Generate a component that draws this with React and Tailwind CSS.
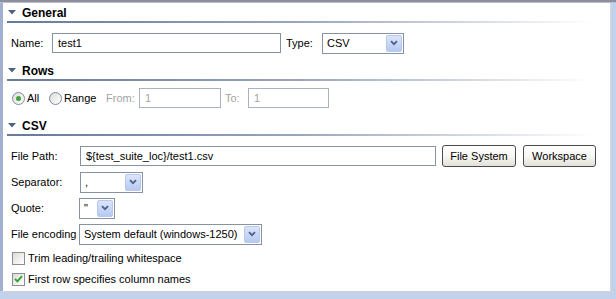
import React from 'react';

function SectionHeader({ title }) {
  return (
    <div>
      <div className="h-[17px] flex items-center pl-[5px]">
        <svg width="8" height="5" viewBox="0 0 8 5" className="mr-[6px]">
          <path d="M0 0h8L4 4.5z" fill="#4e6287" />
        </svg>
        <span className="font-bold text-[12px] leading-none">{title}</span>
      </div>
      <div className="ml-[4px] w-[586px] h-[2px] bg-gradient-to-r from-[#667a99] via-[#9aa6bb] to-white" />
    </div>
  );
}

function TextBox({ value, width, disabled }) {
  return (
    <div
      className={`h-[20px] flex items-center pl-[5px] bg-white border ${
        disabled ? 'border-[#a9b3bd] text-[#a3a3a3]' : 'border-[#8593a3]'
      }`}
      style={{ width }}
    >
      {value}
    </div>
  );
}

function Chevron() {
  return (
    <svg width="8" height="6" viewBox="0 0 8 6">
      <path d="M1 1.2l3 3 3-3" fill="none" stroke="#4d6185" strokeWidth="1.8" />
    </svg>
  );
}

function Select({ value, width }) {
  return (
    <div
      className="h-[21px] flex items-center bg-white border border-[#8593a3] pl-[4px] pr-[1px]"
      style={{ width }}
    >
      <span className="flex-1 whitespace-nowrap overflow-hidden">{value}</span>
      <div className="w-[16px] h-[17px] rounded-[2px] border border-[#b7c7ee] bg-gradient-to-b from-[#dbe5fb] to-[#b7c9f3] flex items-center justify-center">
        <Chevron />
      </div>
    </div>
  );
}

function Button({ label, width }) {
  return (
    <div
      className="h-[22px] flex items-center justify-center rounded-[3px] border border-[#4b4b4b] bg-gradient-to-b from-white via-[#f7f7f4] to-[#e2e0d8]"
      style={{ width }}
    >
      {label}
    </div>
  );
}

function Radio({ checked }) {
  return (
    <div className="w-[13px] h-[13px] rounded-full border border-[#7b8ca3] bg-gradient-to-br from-[#dcdcd6] to-white flex items-center justify-center">
      {checked && <div className="w-[5px] h-[5px] rounded-full bg-[#3ea43e]" />}
    </div>
  );
}

function Checkbox({ checked }) {
  return (
    <div className="w-[13px] h-[13px] border border-[#8a8d92] bg-gradient-to-br from-[#dcdcd6] to-white flex items-center justify-center">
      {checked && (
        <svg width="9" height="8" viewBox="0 0 9 8">
          <path d="M1 3.8l2.4 2.5L8 1.2" fill="none" stroke="#2fa12f" strokeWidth="1.9" />
        </svg>
      )}
    </div>
  );
}

export default function App() {
  return (
    <div className="w-[616px] h-[299px] flex flex-col bg-white overflow-hidden font-['Liberation_Sans',Arial,sans-serif] text-[11px] text-black">
      <div className="h-[2px] bg-[#8d909c]" />
      <div className="h-px bg-[#b9c0d4]" />
      <div className="flex flex-1 min-h-0">
        <div className="w-[3px] bg-[#a2b0cf]" />
        <div className="flex-1 flex flex-col pt-px">
          {/* General */}
          <SectionHeader title="General" />
          <div className="mt-[9px] h-[22px] flex items-center pl-[8px]">
            <span className="w-[41px]">Name:</span>
            <TextBox value="test1" width={229} />
            <span className="ml-[5px] w-[36px]">Type:</span>
            <Select value="CSV" width={82} />
          </div>

          {/* Rows */}
          <div className="mt-[8px]">
            <SectionHeader title="Rows" />
          </div>
          <div className="mt-[7px] h-[20px] flex items-center pl-[9px]">
            <Radio checked />
            <span className="ml-[2px] w-[22px]">All</span>
            <Radio />
            <span className="ml-[2px] w-[42px]">Range</span>
            <span className="w-[33px] text-[#a3a3a3]">From:</span>
            <TextBox value="1" width={82} disabled />
            <span className="ml-[4px] w-[23px] text-[#a3a3a3]">To:</span>
            <TextBox value="1" width={81} disabled />
          </div>

          {/* CSV */}
          <div className="mt-[9px]">
            <SectionHeader title="CSV" />
          </div>
          <div className="mt-[9px] h-[22px] flex items-center pl-[8px]">
            <span className="w-[69px]">File Path:</span>
            <TextBox value="${test_suite_loc}/test1.csv" width={356} />
            <div className="ml-[6px]">
              <Button label="File System" width={74} />
            </div>
            <div className="ml-[7px]">
              <Button label="Workspace" width={73} />
            </div>
          </div>
          <div className="mt-[4px] h-[22px] flex items-center pl-[8px]">
            <span className="w-[69px]">Separator:</span>
            <Select value="," width={63} />
          </div>
          <div className="mt-[4px] h-[22px] flex items-center pl-[8px]">
            <span className="w-[68px]">Quote:</span>
            <Select value={'"'} width={36} />
          </div>
          <div className="mt-[4px] h-[22px] flex items-center pl-[8px]">
            <span className="w-[68px] whitespace-nowrap">File encoding</span>
            <Select value="System default (windows-1250)" width={183} />
          </div>
          <div className="mt-[5px] h-[16px] flex items-center pl-[9px]">
            <Checkbox />
            <span className="ml-[3px]">Trim leading/trailing whitespace</span>
          </div>
          <div className="mt-[5px] h-[16px] flex items-center pl-[9px]">
            <Checkbox checked />
            <span className="ml-[3px]">First row specifies column names</span>
          </div>
        </div>
        <div className="w-px bg-[#d6d8dc]" />
        <div className="w-[5px] bg-[#c2d2ec]" />
      </div>
      <div className="h-px bg-[#cfd3d8]" />
      <div className="h-[7px] bg-[#c2d2ec]" />
    </div>
  );
}
